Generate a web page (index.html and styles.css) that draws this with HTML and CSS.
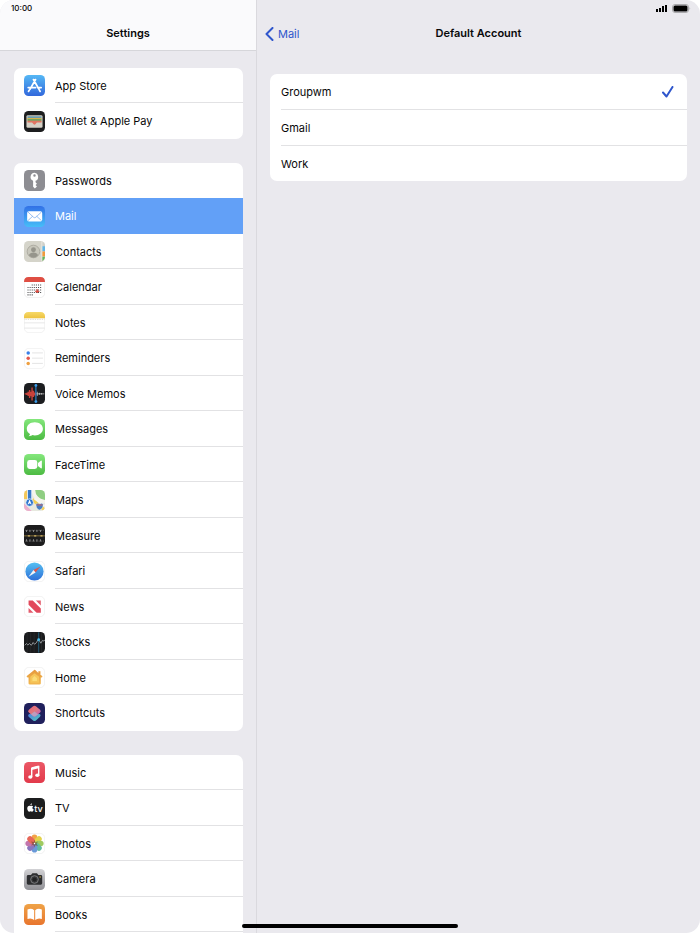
FILE: index.html
```html
<!DOCTYPE html>
<html lang="en">
<head>
<meta charset="utf-8">
<meta name="viewport" content="width=device-width, initial-scale=1">
<title>Settings</title>
<link rel="stylesheet" href="styles.css">
</head>
<body>
<div class="screen">
  <aside class="sidebar">
    <header class="sidebar-header">
      <div class="status"><time>10:00</time></div>
      <h1 class="title">Settings</h1>
    </header>
    <nav class="groups">
      <ul class="card">
        <li><a class="row" href="#">
          <svg class="icon" viewBox="0 0 60 60" aria-hidden="true"><defs><linearGradient id="store" x2="0" y2="1"><stop stop-color="#55b8f5"/><stop offset="1" stop-color="#3268dc"/></linearGradient></defs><rect width="60" height="60" rx="13" fill="url(#store)"/><path d="M33 13 17 41M27 13l16 28M12 36h21M39 36h10M15 43l-2 4M44 43l2 4" fill="none" stroke="#fff" stroke-width="5" stroke-linecap="round"/></svg>
          <span class="label">App Store</span></a></li>
        <li><a class="row" href="#">
          <svg class="icon" viewBox="0 0 60 60" aria-hidden="true"><rect width="60" height="60" rx="13" fill="#1d1e1f"/><rect x="7" y="12" width="46" height="36" rx="4" fill="#d5d1c6"/><path d="M10 15h40v7H10z" fill="#6c9cae"/><path d="M10 20h40v5H10z" fill="#d8b34c"/><path d="M10 23h40v6H10z" fill="#74a360"/><path d="M10 28h40v5H38c-3 0-4 6-8 6s-5-6-8-6H10z" fill="#e17562"/></svg>
          <span class="label">Wallet &amp; Apple Pay</span></a></li>
      </ul>
      <ul class="card">
        <li><a class="row plain" href="#">
          <svg class="icon" viewBox="0 0 60 60" aria-hidden="true"><rect width="60" height="60" rx="13" fill="#8d8d92"/><path fill="#fff" fill-rule="evenodd" d="M30 8a12 12 0 0 0-4 23v17l5 5 6-6-4-4 4-4-4-4v-4A12 12 0 0 0 30 8m0 4a3.500 3.500 0 1 1 0 7 3.500 3.500 0 0 1 0-7"/></svg>
          <span class="label">Passwords</span></a></li>
        <li><a class="row selected" href="#" aria-current="page">
          <svg class="icon" viewBox="0 0 60 60" aria-hidden="true"><defs><linearGradient id="mail" x2="0" y2="1"><stop stop-color="#3271e6"/><stop offset="1" stop-color="#46bdf8"/></linearGradient></defs><rect width="60" height="60" rx="13" fill="url(#mail)"/><rect x="9" y="15" width="43" height="29" rx="5" fill="#fff"/><path d="m11 17 16 15q3.500 3 7 0l16-15M11 42l14-13M50 42 36 29" fill="none" stroke="#6aa4ed" stroke-width="2"/></svg>
          <span class="label">Mail</span></a></li>
        <li><a class="row" href="#">
          <svg class="icon" viewBox="0 0 60 60" aria-hidden="true"><rect width="60" height="60" rx="13" fill="#d5d4ca"/><path d="M52 3q8 3 8 11v2h-8z" fill="#cecfca"/><path d="M52 15h8v14h-8z" fill="#61b5e6"/><path d="M52 30h8v14h-8z" fill="#f19a3c"/><path d="M52 45h8q0 9-8 13z" fill="#63b55b"/><path d="M51 1v58" stroke="#f0efe8" stroke-width="2"/><circle cx="27" cy="30" r="18" fill="#c8c7bc" stroke="#a09f95" stroke-width="2"/><circle cx="27" cy="25" r="7" fill="#96958c"/><path d="M14 41q3-8 13-8t13 8q-5 7-13 7t-13-7" fill="#96958c"/></svg>
          <span class="label">Contacts</span></a></li>
        <li><a class="row" href="#">
          <svg class="icon" viewBox="0 0 60 60" aria-hidden="true"><rect x="1" y="1" width="58" height="58" rx="13" fill="#fff" stroke="#e8e8e8" stroke-width="2"/><path d="M0 14Q0 0 13 0h34q13 0 13 14z" fill="#df4e43"/><path d="M22 23h29M10 30h41M10 37h41M10 44h41M10 51h17" stroke="#4a4a4c" stroke-width="3" stroke-dasharray="3 3"/><path d="M38 35v11M32 41h12" stroke="#df4e43" stroke-width="4"/></svg>
          <span class="label">Calendar</span></a></li>
        <li><a class="row" href="#">
          <svg class="icon" viewBox="0 0 60 60" aria-hidden="true"><defs><linearGradient id="notes" x2="0" y2="1"><stop stop-color="#f6d968"/><stop offset="1" stop-color="#edc23f"/></linearGradient></defs><rect x="1" y="1" width="58" height="58" rx="13" fill="#fff" stroke="#ececec" stroke-width="2"/><path d="M0 18v-5Q0 0 13 0h34q13 0 13 13v5z" fill="url(#notes)"/><path d="M2 21h56" stroke="#b5b5ab" stroke-width="2" stroke-dasharray="2 3"/><path d="M1 31h58M1 46h58" stroke="#dcdcdc" stroke-width="2"/></svg>
          <span class="label">Notes</span></a></li>
        <li><a class="row" href="#">
          <svg class="icon" viewBox="0 0 60 60" aria-hidden="true"><rect x="1" y="1" width="58" height="58" rx="13" fill="#fff" stroke="#ececec" stroke-width="2"/><path d="M23 14h31M23 29h31M23 44h31" stroke="#d8d8da" stroke-width="2"/><circle cx="12" cy="14" r="5" fill="#397fe8"/><circle cx="12" cy="29" r="5" fill="#e3564b"/><circle cx="12" cy="44" r="5" fill="#efa040"/></svg>
          <span class="label">Reminders</span></a></li>
        <li><a class="row" href="#">
          <svg class="icon" viewBox="0 0 60 60" aria-hidden="true"><rect width="60" height="60" rx="13" fill="#1c1d20"/><path d="M2 31h5M8 28v6M12 25v12M16 20v23M20 25v13M23 13v37M27 22v18M31 27v9" stroke="#c9423b" stroke-width="4"/><path d="M38 25v12M44 28v6M50 29v4M35 31h23" stroke="#dadada" stroke-width="2"/><path d="M34 6v48" stroke="#318fdc" stroke-width="3"/><circle cx="34" cy="7" r="4" fill="#3b9cea"/><circle cx="34" cy="53" r="4" fill="#3b9cea"/></svg>
          <span class="label">Voice Memos</span></a></li>
        <li><a class="row" href="#">
          <svg class="icon" viewBox="0 0 60 60" aria-hidden="true"><defs><linearGradient id="green" x2="0" y2="1"><stop stop-color="#84e77c"/><stop offset="1" stop-color="#4dbb43"/></linearGradient></defs><rect width="60" height="60" rx="13" fill="url(#green)"/><path d="M31 9C17 9 8 17 8 28c0 7 4 12 9 15 0 3-2 5-4 6 5 0 9-1 11-3l7 1c13 0 23-8 23-19S44 9 31 9" fill="#fff"/></svg>
          <span class="label">Messages</span></a></li>
        <li><a class="row" href="#">
          <svg class="icon" viewBox="0 0 60 60" aria-hidden="true"><rect width="60" height="60" rx="13" fill="url(#green)"/><rect x="9" y="17" width="29" height="26" rx="7" fill="#fff"/><path d="m40 26 8-7q3-1 3 2v18q0 3-3 2l-8-7z" fill="#fff"/></svg>
          <span class="label">FaceTime</span></a></li>
        <li><a class="row" href="#">
          <svg class="icon" viewBox="0 0 60 60" aria-hidden="true"><defs><clipPath id="tile"><rect width="60" height="60" rx="13"/></clipPath></defs><g clip-path="url(#tile)"><path d="M0 0h60v60H0z" fill="#e7e9df"/><path d="M20 0h40v38z" fill="#8fce82"/><path d="M0 0h10v26H0z" fill="#f4c85a"/><path d="M0 38l22 22H0z" fill="#ecb0cc"/><path d="M27 0c1 21 12 30 36 34" fill="none" stroke="#f4f4ee" stroke-width="10"/><path d="M24 27 60 58" stroke="#f3cf55" stroke-width="9"/><path d="M30 24 60 46" stroke="#f6f6f2" stroke-width="6"/><path d="M16 0v38" stroke="#fff" stroke-width="14"/><path d="M16 0v38" stroke="#397ac9" stroke-width="10"/><circle cx="16" cy="36" r="11" fill="#2f76cf" stroke="#fff" stroke-width="2"/><path d="m16 27 6 15-6-4-6 4z" fill="#fff"/><path d="m34 41 5-3q6 4 11 0l5 3c-2 7 0 12-11 16-10-4-8-9-10-16" fill="#477fc5" stroke="#fff"/><path d="M36 43h17" stroke="#d6625d" stroke-width="3"/></g></svg>
          <span class="label">Maps</span></a></li>
        <li><a class="row" href="#">
          <svg class="icon" viewBox="0 0 60 60" aria-hidden="true"><rect width="60" height="60" rx="13" fill="#1c1c1d"/><path d="M6 17h50M6 44h50" stroke="#b5b5b5" stroke-width="6" stroke-dasharray="2 8"/><path d="M4 15h54M4 46h54" stroke="#9b9b9b" stroke-width="2" stroke-dasharray="2 3"/><path d="M0 31h60" stroke="#ae9245" stroke-width="2"/><path d="M11 31h6M29 31h6M47 31h6" stroke="#d2b567" stroke-width="4"/></svg>
          <span class="label">Measure</span></a></li>
        <li><a class="row" href="#">
          <svg class="icon" viewBox="0 0 60 60" aria-hidden="true"><defs><linearGradient id="safari" x2="0" y2="1"><stop stop-color="#55c0f2"/><stop offset="1" stop-color="#2e6fd8"/></linearGradient></defs><rect x="1" y="1" width="58" height="58" rx="13" fill="#fff" stroke="#ededed" stroke-width="2"/><circle cx="30" cy="30" r="26" fill="url(#safari)"/><path d="m47 16-20 10 6 7z" fill="#df574d"/><path d="m13 45 14-19 6 7z" fill="#f5f5f5"/></svg>
          <span class="label">Safari</span></a></li>
        <li><a class="row" href="#">
          <svg class="icon" viewBox="0 0 60 60" aria-hidden="true"><rect x="1" y="1" width="58" height="58" rx="13" fill="#fff" stroke="#ececec" stroke-width="2"/><path d="M13 13h12l23 23v12H36L13 25z" fill="#e2485b"/><path d="M34 13h14v14zM13 34v14h14z" fill="#e45c6d"/></svg>
          <span class="label">News</span></a></li>
        <li><a class="row" href="#">
          <svg class="icon" viewBox="0 0 60 60" aria-hidden="true"><rect width="60" height="60" rx="13" fill="#1a1b1d"/><path d="M9 3v54M19 1v58M29 1v58M50 3v54" stroke="#2a2c2e" stroke-width="2"/><path d="m2 38 5-5 4 4 5-4 5 5 5-8 4 5 5-4 5-9 4 3 4 7 5-8 4 2 3-4" fill="none" stroke="#bdc2c5" stroke-width="2"/><path d="M42 1v58" stroke="#257b9f" stroke-width="2"/><circle cx="42" cy="22" r="4" fill="#46b9e7"/></svg>
          <span class="label">Stocks</span></a></li>
        <li><a class="row" href="#">
          <svg class="icon" viewBox="0 0 60 60" aria-hidden="true"><defs><linearGradient id="home" x2="0" y2="1"><stop stop-color="#e6993d"/><stop offset="1" stop-color="#f2b850"/></linearGradient></defs><rect x="1" y="1" width="58" height="58" rx="13" fill="#fff" stroke="#ececec" stroke-width="2"/><path d="M30 8 8 26q-2 4 3 4h2v17q0 3 4 3h27q4 0 4-3V30h2q4-1 2-4l-5-4V12h-6v5L33 9q-1-2-3-1" fill="url(#home)"/><path d="m30 18 13 10v17H18V28z" fill="#f6c65a"/><path d="m30 26 7 6v8H24v-8z" fill="#fbdc79"/></svg>
          <span class="label">Home</span></a></li>
        <li><a class="row" href="#">
          <svg class="icon" viewBox="0 0 60 60" aria-hidden="true"><defs><linearGradient id="cutA" x2="1" y2="1"><stop stop-color="#ec6170"/><stop offset=".5" stop-color="#df7780"/><stop offset="1" stop-color="#b25bc9"/></linearGradient><linearGradient id="cutB" x2="1" y2="1"><stop stop-color="#4d78e5"/><stop offset="1" stop-color="#55cbb9"/></linearGradient></defs><rect width="60" height="60" rx="13" fill="#20205c"/><path d="m13 33 11-6 22 5q3 4-1 8L34 50q-4 3-8 0L14 40q-4-4-1-7" fill="url(#cutB)"/><path d="M26 9 14 19q-5 4 0 8l12 10q4 3 8 0l12-10q4-4 0-8L34 9q-4-3-8 0" fill="url(#cutA)"/><path d="m20 32 10-8 10 8-6 5q-4 3-8 0z" fill="#b8a8c8" opacity=".8"/></svg>
          <span class="label">Shortcuts</span></a></li>
      </ul>
      <ul class="card">
        <li><a class="row" href="#">
          <svg class="icon" viewBox="0 0 60 60" aria-hidden="true"><defs><linearGradient id="music" x2="0" y2="1"><stop stop-color="#eb5866"/><stop offset="1" stop-color="#e23a4b"/></linearGradient></defs><rect width="60" height="60" rx="13" fill="url(#music)"/><path d="M22 43V18l20-5v25" fill="none" stroke="#fff" stroke-width="4"/><path d="m22 15 20-5v8l-20 5z" fill="#fff"/><ellipse cx="18" cy="43" rx="6" ry="5" fill="#fff"/><ellipse cx="38" cy="38" rx="6" ry="5" fill="#fff"/></svg>
          <span class="label">Music</span></a></li>
        <li><a class="row" href="#">
          <svg class="icon" viewBox="0 0 60 60" aria-hidden="true"><rect width="60" height="60" rx="13" fill="#1c1d1e"/><path d="M26 24c-2-3-5-2-7-1-3-1-5-2-8 1-4 5 0 15 4 15l4-1 4 1c2 0 4-3 5-6-5-2-5-7-2-9M18 21q0-5 5-6 0 5-5 6" fill="#fff"/><text class="tv-mark" x="29" y="39">tv</text></svg>
          <span class="label">TV</span></a></li>
        <li><a class="row" href="#">
          <svg class="icon" viewBox="0 0 60 60" aria-hidden="true"><rect x="1" y="1" width="58" height="58" rx="13" fill="#fff" stroke="#ececec" stroke-width="2"/><g opacity=".92"><rect x="22" y="4" width="16" height="24" rx="8" fill="#f19b38"/><rect x="22" y="4" width="16" height="24" rx="8" fill="#e1cf3c" transform="rotate(45 30 30)"/><rect x="22" y="4" width="16" height="24" rx="8" fill="#97c653" transform="rotate(90 30 30)"/><rect x="22" y="4" width="16" height="24" rx="8" fill="#54b69a" transform="rotate(135 30 30)"/><rect x="22" y="4" width="16" height="24" rx="8" fill="#5d91d5" transform="rotate(180 30 30)"/><rect x="22" y="4" width="16" height="24" rx="8" fill="#806bb9" transform="rotate(225 30 30)"/><rect x="22" y="4" width="16" height="24" rx="8" fill="#bd69a6" transform="rotate(270 30 30)"/><rect x="22" y="4" width="16" height="24" rx="8" fill="#e55b4b" transform="rotate(315 30 30)"/></g><path d="m30 19 3 8 7-3-4 7 4 6-8-2-2 6-3-7-7 2 4-6-4-6 8 2z" fill="#6b4532" opacity=".6"/><circle cx="30" cy="30" r="2" fill="#fff"/></svg>
          <span class="label">Photos</span></a></li>
        <li><a class="row" href="#">
          <svg class="icon" viewBox="0 0 60 60" aria-hidden="true"><defs><linearGradient id="camera" x2="0" y2="1"><stop stop-color="#d2d2d5"/><stop offset="1" stop-color="#909095"/></linearGradient></defs><rect width="60" height="60" rx="13" fill="url(#camera)"/><path d="M12 17h8l4-5h13l4 5h7q4 0 4 4v20q0 4-4 4H12q-4 0-4-4V21q0-4 4-4" fill="#2d2e30"/><circle cx="30" cy="30" r="11" fill="#38393b" stroke="#929397" stroke-width="2"/><circle cx="30" cy="30" r="6" fill="#202123"/><circle cx="46" cy="23" r="2" fill="#d7b64a"/></svg>
          <span class="label">Camera</span></a></li>
        <li><a class="row" href="#">
          <svg class="icon" viewBox="0 0 60 60" aria-hidden="true"><defs><linearGradient id="books" x2="0" y2="1"><stop stop-color="#efa347"/><stop offset="1" stop-color="#e8752e"/></linearGradient></defs><rect width="60" height="60" rx="13" fill="url(#books)"/><path d="M29 18q-8-7-19-2v27q11-4 19 3zM32 18q8-7 19-2v27q-11-4-19 3z" fill="#fff"/></svg>
          <span class="label">Books</span></a></li>
        <li><a class="row" href="#" aria-label="More"></a></li>
      </ul>
    </nav>
  </aside>
  <main class="detail">
    <div class="status status-end">
      <svg class="signal" viewBox="0 0 12 8" aria-hidden="true"><path d="M0 5h2v3H0zM3 4h2v4H3zM6 2h2v6H6zM9 1h2v7H9z"/></svg>
      <svg class="battery" viewBox="0 0 19 9" aria-hidden="true"><rect x=".5" y=".5" width="16" height="8" rx="2.500" fill="none" stroke="#aaaaad"/><rect x="1.500" y="1.500" width="14" height="6" rx="1.500"/><path d="M17.500 3q1.500 1.500 0 3z" fill="#aaaaad"/></svg>
    </div>
    <header class="bar">
      <a class="back" href="#"><svg class="chevron" viewBox="0 0 9 14" aria-hidden="true"><path d="M7.500 1 1.500 7l6 6"/></svg>Mail</a>
      <h2 class="title">Default Account</h2>
    </header>
    <form class="card accounts">
      <label class="row"><span class="label">Groupwm</span><input class="choice" type="radio" name="account" checked><svg class="tick" viewBox="0 0 12 12" aria-hidden="true"><path d="m1 6.500 3.500 4L10.500 1"/></svg></label>
      <label class="row"><span class="label">Gmail</span><input class="choice" type="radio" name="account"><svg class="tick" viewBox="0 0 12 12" aria-hidden="true"><path d="m1 6.500 3.500 4L10.500 1"/></svg></label>
      <label class="row"><span class="label">Work</span><input class="choice" type="radio" name="account"><svg class="tick" viewBox="0 0 12 12" aria-hidden="true"><path d="m1 6.500 3.500 4L10.500 1"/></svg></label>
    </form>
  </main>
  <div class="home-indicator"></div>
</div>
</body>
</html>
```
FILE: styles.css
```css
* {
  box-sizing: border-box;
}

body {
  margin: 0;
  background: #fff;
  color: #080809;
  font-family: Inter, "Liberation Sans", sans-serif;
  font-size: 11px;
  line-height: 16px;
}

.screen {
  position: relative;
  display: flex;
  height: 100vh;
  overflow: hidden;
  border-radius: 14px;
  background: #eae9ee;
}

.sidebar {
  flex: 0 0 257px;
  border-right: 1px solid #dad9de;
  overflow: hidden;
}

.sidebar-header {
  height: 51px;
  border-bottom: 1px solid #d6d6da;
  background: #fafafc;
}

.status {
  display: flex;
  align-items: center;
  height: 16px;
  padding: 0 11px;
  font-size: 8px;
  font-weight: 500;
}

.status-end {
  justify-content: flex-end;
  gap: 4px;
  padding-right: 9px;
}

.signal {
  width: 12px;
  height: 8px;
}

.battery {
  width: 19px;
  height: 9px;
}

.title {
  margin: 0;
  font-size: 11px;
  font-weight: 600;
  line-height: 35px;
  text-align: center;
}

.groups {
  display: flex;
  flex-direction: column;
  gap: 24px;
  padding: 17px 13px 0 14px;
}

.card {
  margin: 0;
  padding: 0;
  border-radius: 7px;
  overflow: hidden;
  background: #fff;
  list-style: none;
}

.row {
  display: flex;
  align-items: center;
  gap: 10px;
  height: 35px;
  padding-left: 10px;
  color: inherit;
  text-decoration: none;
}

li:nth-child(even) .row,
.accounts .row:nth-child(even) {
  height: 36px;
}

.icon {
  flex: none;
  width: 21px;
  height: 21px;
}

.label {
  flex: 1;
  align-self: stretch;
  display: flex;
  align-items: center;
  box-shadow: inset 0 -1px #e2e2e4;
}

li:last-child .label,
.accounts .row:last-child .label,
.plain .label,
.selected .label {
  box-shadow: none;
}

.selected {
  background: #62a0f7;
  color: #fff;
}

.tv-mark {
  fill: #fff;
  font-size: 26px;
  font-weight: 500;
}

.detail {
  flex: 1;
  min-width: 0;
}

.bar {
  position: relative;
}

.back {
  position: absolute;
  left: 8px;
  top: 0;
  display: flex;
  align-items: center;
  gap: 4px;
  height: 35px;
  color: #2f56cc;
  text-decoration: none;
}

.chevron {
  width: 9px;
  height: 14px;
  fill: none;
  stroke: currentColor;
  stroke-width: 2;
  stroke-linecap: round;
  stroke-linejoin: round;
}

.accounts {
  margin: 23px 13px 0;
}

.accounts .row {
  position: relative;
  padding-left: 11px;
}

.accounts .row:first-child {
  height: 36px;
}

.choice {
  position: absolute;
  right: 13px;
  appearance: none;
  width: 12px;
  height: 12px;
  margin: 0;
}

.tick {
  position: absolute;
  right: 13px;
  width: 12px;
  height: 12px;
  fill: none;
  stroke: #2f56cc;
  stroke-width: 2;
  stroke-linecap: round;
  stroke-linejoin: round;
  visibility: hidden;
}

.choice:checked + .tick {
  visibility: visible;
}

.home-indicator {
  position: absolute;
  right: 242px;
  bottom: 5px;
  left: 242px;
  height: 4px;
  border-radius: 2px;
  background: #000;
}
```
